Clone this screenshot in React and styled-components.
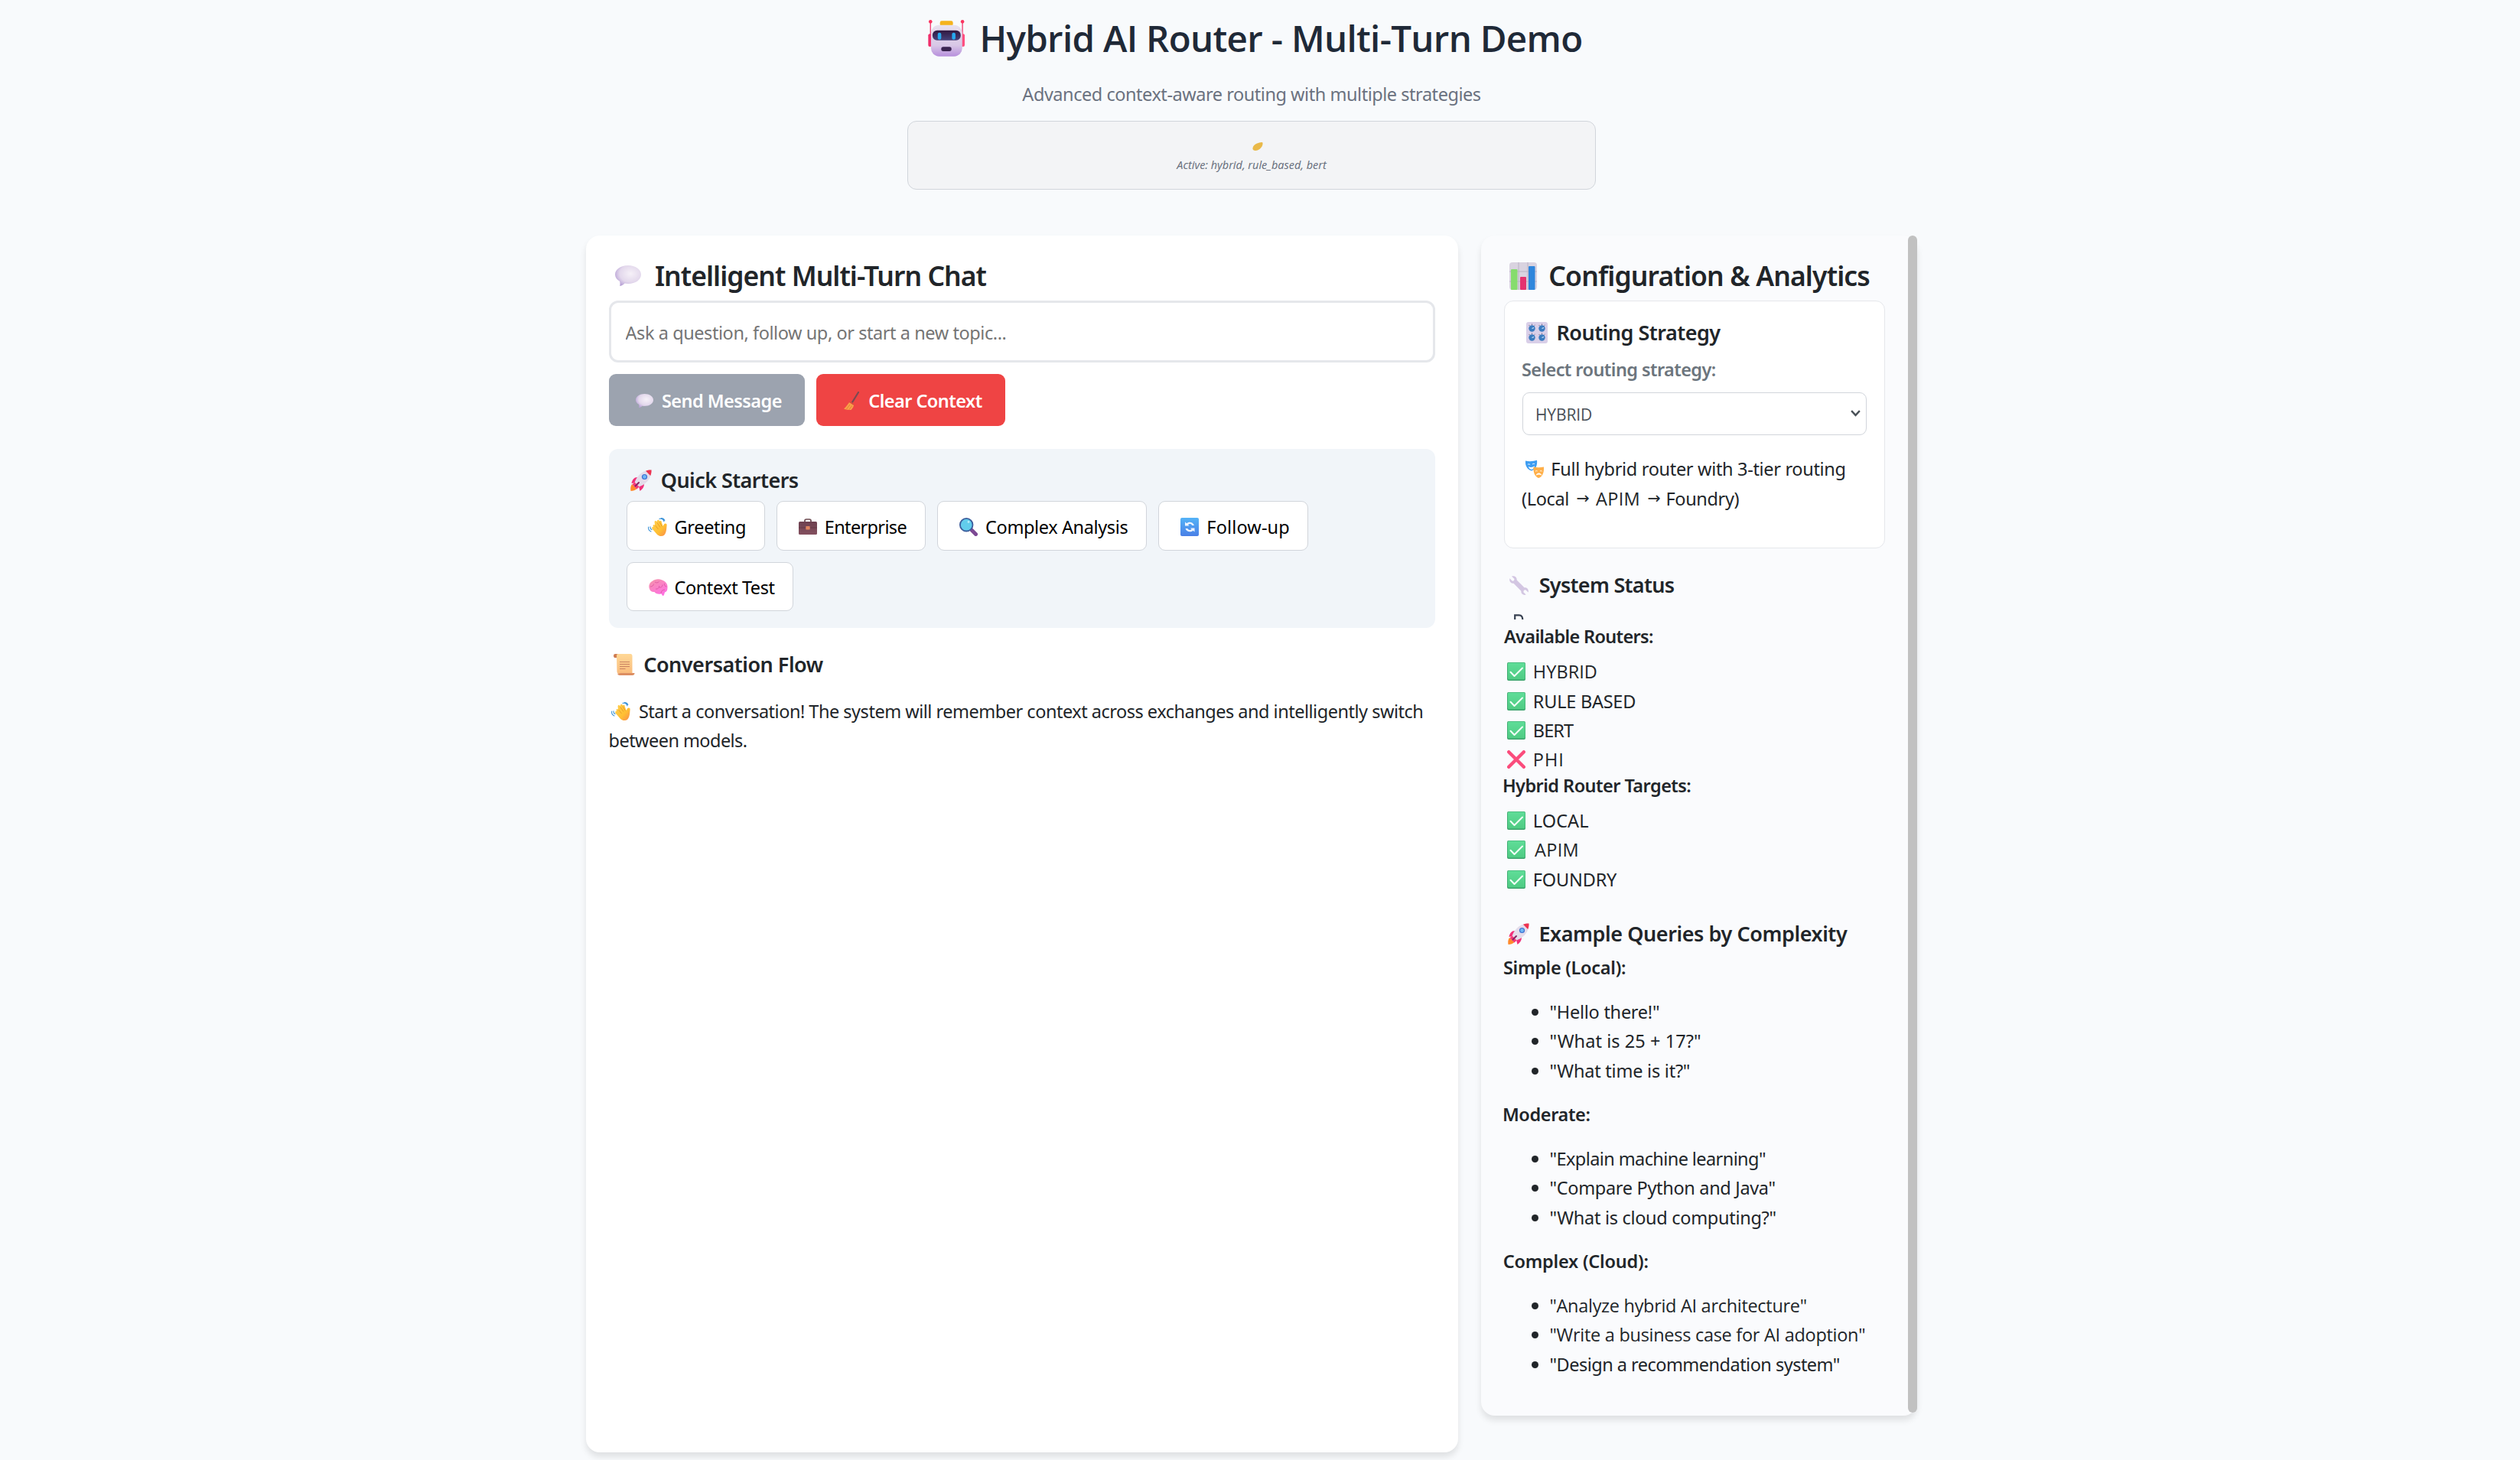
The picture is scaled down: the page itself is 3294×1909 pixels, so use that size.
import React from "react";
import styled, { createGlobalStyle } from "styled-components";

const NOTO = '"Noto Sans", "Open Sans", sans-serif';
const OPEN = '"Open Sans", "Noto Sans", sans-serif';

const GlobalStyle = createGlobalStyle`
  *, *::before, *::after { box-sizing: border-box; }
  html, body { margin: 0; padding: 0; }
  body { background: #f8fafc; color: #212529; font-family: ${NOTO}; font-size: 23.5px; overflow: hidden; }
`;

/* ---------- page ---------- */
const Page = styled.div`
  height: 1909px;
  padding-right: 22px;
  overflow: hidden;
  display: flex;
  flex-direction: column;
  align-items: center;
`;
const Header = styled.header`
  width: 900px;
  height: 308px;
  padding-top: 13px;
  display: flex;
  flex-direction: column;
  align-items: center;
`;
const Title = styled.h1`
  margin: 0 0 0 9px;
  height: 72px;
  display: flex;
  align-items: center;
  color: #1f2937;
`;
const Subtitle = styled.p`
  margin: 17px 0;
  height: 39px;
  display: flex;
  align-items: center;
  color: #6b7280;
`;
const Banner = styled.div`
  width: 100%;
  height: 90px;
  padding-top: 27px;
  background: #f3f4f6;
  border: 1px solid #d1d5db;
  border-radius: 12px;
  display: flex;
  flex-direction: column;
  align-items: center;
  color: #6b7280;
  svg { margin-left: 15px; }
`;
const BannerText = styled.p`
  margin: 6px 0 0;
  height: 22px;
  display: flex;
  align-items: center;
  font-style: italic;
`;
const Columns = styled.main`
  width: 1740px;
  display: grid;
  grid-template-columns: 2fr 1fr;
  gap: 30px;
  align-items: start;
`;
const Panel = styled.section`
  height: ${(p) => p.$h}px;
  padding: 30px;
  border-radius: 18px;
  background: ${(p) => p.$bg || "#fff"};
  box-shadow: 0 6px 9px rgba(0, 0, 0, 0.1);
`;
const SidePanel = styled(Panel)`
  display: flex;
  padding: 0;
`;
const SideBody = styled.div`
  flex: 1;
  padding: 30px;
`;
const ScrollThumb = styled.div`
  width: 12px;
  height: 1539px;
  border-radius: 6px;
  background: #c1c1c1;
`;

/* ---------- text ---------- */
const Line = styled.div`
  display: flex;
  align-items: center;
  height: ${(p) => p.$h || 38.4}px;
  margin-top: ${(p) => p.$mt || 0}px;
  color: ${(p) => p.$color || "inherit"};
`;
const IconSlot = styled.span`
  flex: none;
  display: flex;
  align-items: center;
  width: ${(p) => p.$w}px;
  padding: 2px 0 0 ${(p) => p.$pl || 0}px;
`;
const Text = styled.span`
  white-space: pre;
  padding-top: 2px;
  margin-left: ${(p) => -(p.$b || 0)}px;
  font-family: ${(p) => (p.$open ? OPEN : NOTO)};
  font-weight: ${(p) => (p.$strong ? 570 : 400)};
  letter-spacing: ${(p) => p.$ls || 0}px;
`;
const TitleText = styled(Text)`
  padding-top: 0;
  font-size: 47.5px;
`;
const H2Text = styled(Text)`
  padding-top: 1px;
  font-size: 35.5px;
`;
const H3Text = styled(Text)`
  padding-top: 1px;
  font-size: 27px;
`;
const SmallText = styled(Text)`
  font-size: 14.4px;
`;
const SelectText = styled(Text)`
  font-size: 21px;
`;
const Arrow = styled.span`
  width: 17px;
  margin: 0 8.5px 0 9.5px;
  font: 20.5px "DejaVu Sans", sans-serif;
`;
const List = styled.ul`
  list-style: none;
  margin: ${(p) => p.$mt}px 0 0;
  padding: 0;
`;
const Bullet = styled.span`
  flex: none;
  width: 9px;
  height: 9px;
  margin: 3px 16.5px 0 35.5px;
  border-radius: 50%;
  background: #212529;
`;

/* ---------- controls ---------- */
const Input = styled.input`
  display: block;
  width: 100%;
  height: 81px;
  margin-top: 12px;
  padding: 2px 18.5px 0;
  border: 3px solid #e5e7eb;
  border-radius: 12px;
  background: #fff;
  font-family: ${NOTO};
  font-size: 23.5px;
  letter-spacing: -0.43px;
  outline: none;
  &::placeholder { color: #757575; opacity: 1; }
`;
const Row = styled.div`
  display: flex;
  flex-wrap: wrap;
  gap: 15px;
  margin-top: ${(p) => p.$mt || 0}px;
`;
const Button = styled.button`
  width: ${(p) => p.$w}px;
  height: 68px;
  padding: 0;
  display: flex;
  align-items: center;
  border: 0;
  border-radius: 9px;
  background: ${(p) => p.$bg};
  color: #fff;
  font-size: 23.5px;
`;
const Chip = styled.button`
  width: ${(p) => p.$w}px;
  height: ${(p) => p.$h || 65}px;
  padding: 0;
  display: flex;
  align-items: center;
  border: 1px solid #d1d5db;
  border-radius: 9px;
  background: #fff;
  color: #000;
  font-size: 23.5px;
`;
const Starters = styled.div`
  margin-top: 30px;
  height: 234px;
  padding: 21px 23px;
  border-radius: 12px;
  background: #f1f5f9;
`;
const Card = styled.div`
  height: 324px;
  margin-top: 12px;
  padding: 21px 23px 0;
  background: #fff;
  border: 1px solid #e5e7eb;
  border-radius: 12px;
`;
const Select = styled.div`
  height: 56px;
  margin-top: 12px;
  padding: 0 7px 0 18px;
  display: flex;
  align-items: center;
  justify-content: space-between;
  border: 1px solid #d1d5db;
  border-radius: 9px;
  color: #495057;
`;
const SpinnerClip = styled.div`
  height: 7px;
  margin: 20px 0 0 13px;
  overflow: hidden;
  svg { display: block; }
`;
const Defs = styled.svg`
  position: absolute;
  width: 0;
  height: 0;
`;

/* ---------- icons ---------- */
const Gradients = () => (
  <Defs>
    <defs>
      <linearGradient id="lilac" x1="0" y1="0" x2="0" y2="1"><stop offset="0" stopColor="#e9e2ee" /><stop offset="0.65" stopColor="#d8c7e6" /><stop offset="1" stopColor="#b78fdc" /></linearGradient>
      <radialGradient id="bubble" cx="0.6" cy="0.4" r="0.65"><stop offset="0" stopColor="#f6f1f8" /><stop offset="0.65" stopColor="#e3d8ec" /><stop offset="1" stopColor="#b9a3d6" /></radialGradient>
      <linearGradient id="hand" x1="0" y1="0" x2="1" y2="1"><stop offset="0" stopColor="#ffd050" /><stop offset="0.6" stopColor="#ffbf33" /><stop offset="1" stopColor="#f98a4b" /></linearGradient>
      <linearGradient id="brain" x1="0" y1="0" x2="0.6" y2="1"><stop offset="0" stopColor="#f594a8" /><stop offset="1" stopColor="#ff72e0" /></linearGradient>
      <linearGradient id="paper" x1="0" y1="0" x2="0" y2="1"><stop offset="0" stopColor="#ffd896" /><stop offset="1" stopColor="#f9bb7c" /></linearGradient>
      <linearGradient id="blueBox" x1="0" y1="0" x2="0" y2="1"><stop offset="0" stopColor="#54b3f7" /><stop offset="1" stopColor="#4a7fe6" /></linearGradient>
      <linearGradient id="case" x1="0" y1="0" x2="0" y2="1"><stop offset="0" stopColor="#6d4150" /><stop offset="1" stopColor="#84505f" /></linearGradient>
      <linearGradient id="visor" x1="0" y1="0" x2="0" y2="1"><stop offset="0" stopColor="#30173f" /><stop offset="1" stopColor="#46427a" /></linearGradient>
      <linearGradient id="green" x1="0" y1="0" x2="0" y2="1"><stop offset="0" stopColor="#5fdd98" /><stop offset="1" stopColor="#4fcb83" /></linearGradient>
    </defs>
  </Defs>
);

const ICONS = {
  robot: ["50 37 150 144", <>
    <path d="M60 46V100M188 46V100" stroke="#f0386f" strokeWidth="4" />
    <circle cx="60" cy="44" r="7" fill="#fb3560" /><circle cx="188" cy="44" r="7" fill="#fb3560" />
    <rect x="51" y="92" width="14" height="50" rx="6" fill="#f02e6c" /><rect x="183" y="92" width="14" height="50" rx="6" fill="#ff4f80" />
    <rect x="98" y="41" width="52" height="20" rx="7" fill="#f5b31c" />
    <rect x="62" y="57" width="125" height="123" rx="32" fill="url(#lilac)" />
    <rect x="68" y="78" width="113" height="39" rx="18" fill="url(#visor)" />
    <rect x="89" y="87" width="14" height="27" rx="6" fill="#27a9ef" /><rect x="146" y="87" width="14" height="27" rx="6" fill="#27a9ef" />
    <rect x="103" y="143" width="41" height="17" rx="8" fill="#3a2450" /></>],
  speech: ["0 0 34 27", <path d="M17 0C26.500 0 34 5 34 12S26.500 24 17 24C15.500 24 14 23.900 12.600 23.600 10.500 26 8 27 6.200 27 6.700 25 6.600 22.500 6 20.700 2.300 18.700 0 15.600 0 12 0 5 7.500 0 17 0Z" fill="url(#bubble)" />],
  broom: ["0 0 20 24", <>
    <path d="M19 1 11 14" stroke="#7a4a52" strokeWidth="2.200" strokeLinecap="round" />
    <path d="M8 12.500 13 16C13.500 19 11.500 22 9.500 24 6 24 2.500 23.500 0 22.500 3 20 5.500 16.500 8 12.500Z" fill="#f9a04a" />
    <path d="M8 12.300 13.200 16 12.600 17.800 6.900 14Z" fill="#d9463f" /><path d="M3.500 23 8 17M7 23.600 10.500 18.500" stroke="#e0752f" strokeWidth="0.800" /></>],
  rocket: ["0 0 28 28", <>
    <path d="M2 19C0 22 0 25 0.500 28 3.500 28 6.500 27 8.500 25Z" fill="#ff8a2b" />
    <path d="M9 10C5 10 2.500 13 1.500 18L8 17ZM18 19C18 23 15.500 26 12.500 28L10.500 20Z" fill="#f0307a" />
    <path d="M27.500 0.500C20 0 13 4 9 10 7 13 5.500 16 5 19L9 23C12 22.500 15 21 18 19 24 15 28 8 27.500 0.500Z" fill="#e4dcea" />
    <path d="M27.500 0.500C25 0.300 22.300 0.800 20 1.800L26.200 8C27.200 5.600 27.700 3 27.500 0.500Z" fill="#ee3350" />
    <circle cx="18.500" cy="9.500" r="3.600" fill="#3d6fd0" /><circle cx="18.500" cy="9.500" r="2.400" fill="#6fb6f5" />
    <path d="M5.500 16.500 11.500 22.500 8.500 25.500 2.500 19.500Z" fill="#f43a78" /><path d="M6.500 21.500 11 17" stroke="#8b1f63" strokeWidth="2" strokeLinecap="round" /></>],
  wave: ["0 0 25 24", <>
    <path d="M7 11.500C5.600 9.600 7.800 8.200 9 9.800L8.600 5.800C8.300 3.800 10.700 3.300 11.300 5.200L12 3.700C12.600 2 15 2.600 14.800 4.400 16 3 18 3.900 17.800 5.800L19.500 11 21 8.500C21.800 7 25 7.200 24.600 9.700 24 15.500 24.300 24 17 24 13.500 24 11.500 21.500 9.500 19L5.500 14.500C4.500 13 6 11 7 12Z" fill="url(#hand)" />
    <path d="M9.500 10 13.500 15M12 6.500 16 12.500M15 5.500 18.500 11.500" stroke="#e99b25" strokeWidth="0.900" fill="none" />
    <path d="M0.700 12C0.300 14.500 1.500 17 4 18M3 11.800C2.800 13.400 3.600 15 5 15.600M15 1.500C17.500 0.500 20.500 2 21 5M17.500 0.600C19.500 0.600 21 1.700 21.800 3.400" stroke="#3b93d8" strokeWidth="1.100" fill="none" strokeLinecap="round" /></>],
  briefcase: ["0 0 24 21", <>
    <path d="M8 5V3Q8 1 10 1H14Q16 1 16 3V5" stroke="#6d4b52" strokeWidth="1.700" fill="none" />
    <rect x="0" y="4" width="24" height="17" rx="1.500" fill="url(#case)" /><path d="M0 12H24" stroke="#5b3341" strokeWidth="0.700" /><rect x="9.300" y="10" width="5.400" height="4.600" rx="0.800" fill="#e08560" /></>],
  magnifier: ["0 0 24 24", <>
    <path d="M16.500 16.500 21.500 21.500" stroke="#7d4a94" strokeWidth="5" strokeLinecap="round" /><circle cx="9.200" cy="9.200" r="8.300" fill="#62cdec" stroke="#3c5d9c" strokeWidth="1.800" />
    <circle cx="12" cy="5.500" r="1.400" fill="#b7ecfa" /></>],
  refresh: ["0 0 24 24", <>
    <rect width="24" height="24" rx="2" fill="url(#blueBox)" />
    <path d="M6 10.500V5.500L8 7.300C11 4.500 16.500 5.300 18 10H15.200C14 7.800 11.600 7.500 10 9L11.500 10.500ZM18.500 13.500V18.500L16.500 16.700C13.500 19.500 8 18.700 6.500 14H9.300C10.500 16.200 12.900 16.500 14.500 15L13 13.500Z" fill="#eef4ff" /></>],
  brain: ["0 0 25 22", <>
    <path d="M1 13C-0.500 10 0.500 5 4.500 3 8 0 13 -0.500 17 1.200 22 2.500 25 7 24.500 11.500 24.500 14.500 23.500 17 21 17.500L19.800 21.500 18 22 16.500 19.300C13 20.500 9 19.500 7.500 17 4.500 17.500 1.800 16 1 13Z" fill="url(#brain)" />
    <path d="M2 10C5 10 6 8.500 6.500 6.500M8 4C10 5.500 12 5 13.500 3.500M9 13C12 13.500 14 11.500 13.500 9M13.500 11C16.500 11.500 18 10 18 7.500M20.500 6C20 8.500 21.500 10 23.500 10M16 19C16 16 18 14 21 14" stroke="#d9539f" strokeWidth="0.800" fill="none" /></>],
  scroll: ["0 0 28 28", <>
    <path d="M0 2.200Q0 0 2.200 0H8V5H2Q0 5 0 2.200Z" fill="#cf7d52" /><path d="M4 2Q4 0 6 0H22.500Q24.500 0 24.500 2.500V26H7.500Q4.500 26 4.500 23Z" fill="url(#paper)" />
    <path d="M8 10.500H21M8 13.500H21M8 16.500H21M8 19.500H15.500" stroke="#c98262" strokeWidth="1.200" /><path d="M9.500 25H27.500Q27.500 28 24.500 28H8Q6 28 5 26Z" fill="#dc8e62" /></>],
  chart: ["0 0 36 36", <>
    <rect width="36" height="36" rx="4" fill="#d9d3e0" /><path d="M12 0V36M24 0V36M0 12H36M0 25H36" stroke="#b9b2c4" strokeWidth="1" />
    <rect x="2" y="9" width="8.500" height="27" rx="1" fill="#86dc6e" /><rect x="14" y="19" width="8" height="17" rx="1" fill="#e4326f" /><rect x="25" y="5" width="8.500" height="31" rx="1" fill="#2f86dc" /></>],
  knobs: ["0 0 28 28", <>
    <rect width="28" height="28" rx="3" fill="#d9cfe8" />
    {[[7.5, 8.5], [20.5, 8.5], [7.5, 20.5], [20.5, 20.5]].map(([x, y]) => (
      <g key={x + "-" + y}><path d={`M${x - 4} ${y - 4.5}l1.200 1.200M${x} ${y - 6}v1.500M${x + 4} ${y - 4.5}l-1.200 1.200`} stroke="#6d6380" strokeWidth="0.900" /><circle cx={x} cy={y} r="4.200" fill="#3b7cc0" /><path d={`M${x} ${y}l2.500 -1`} stroke="#d8ecff" strokeWidth="1.100" /></g>
    ))}</>],
  masks: ["0 0 24 24", <>
    <path d="M0 1.500C4.500 2.600 10.500 2.300 15 0.800 15.800 7.500 13.500 12.800 8 14.500 2.500 13.500-0.800 7.500 0 1.500Z" fill="#3d9df2" />
    <path d="M3 6.300Q4.500 5.200 6 6.500M9 6Q10.500 4.800 12 5.600" stroke="#fff" strokeWidth="0.900" fill="none" />
    <path d="M3.800 9C6.500 10.500 9.500 10.300 12 8 11.500 11 10 12.500 8 13 6 12.600 4.500 11.200 3.800 9Z" fill="#fff" />
    <path d="M10.500 9.500C15 10.500 19.500 10.400 24 9.500 24.500 16 22.500 22.500 17.500 24 12 22.500 10 16 10.500 9.500Z" fill="#ffb04a" />
    <path d="M13 15.200Q14.500 14 15.700 15M19 15Q20.300 14 21.800 15.200" stroke="#fff" strokeWidth="0.900" fill="none" />
    <path d="M14 20.200C15.500 17 19.500 17 21 20.200 18.500 18.900 16.500 18.900 14 20.200Z" fill="#fff" stroke="#fff" strokeWidth="0.600" /></>],
  wrench: ["0 0 25 25", <path d="M3 0.600 6.500 4 6 6.200 3.800 6.700 0.500 3.300C-0.600 6.500 1.500 10 5.500 9.800L15.300 19.800C15 23.500 18.300 25.800 21.700 24.600L18.300 21.200 18.900 18.800 21.200 18.300 24.600 21.500C25.700 18 23 14.800 19.500 15.300L9.700 5.400C9.900 1.600 6.500-0.600 3 0.600Z" fill="#d3c6e2" />],
  check: ["0 0 24 24", <>
    <rect width="24" height="24" rx="2" fill="#3ba36c" /><rect x="0.800" y="0.500" width="22.700" height="22" rx="1.800" fill="url(#green)" /><path d="M4.500 12.800 9.500 18 20 7.500" stroke="#f2fff8" strokeWidth="2" fill="none" strokeLinecap="round" strokeLinejoin="round" /></>],
  cross: ["0 0 24 24", <path d="M2.200 2.200 21.800 21.800M21.800 2.200 2.200 21.800" stroke="#fb4c7c" strokeWidth="4.400" strokeLinecap="round" />],
  leaf: ["0 0 14 11", <path d="M0.500 9C0 4.500 4.500 0.500 13 0 14.500 1.500 13 6.500 9.500 9 6 11.500 1.500 11.500 0.500 9Z" fill="#e9b949" />],
  arc: ["0 0 13 9", <path d="M1.200 7V1.400H6.500C10 1.400 11.500 3.500 11.300 9" stroke="#374151" strokeWidth="2.200" fill="none" />],
  chevron: ["0 0 14 9", <path d="M1.200 1.200 7 7 12.800 1.200" stroke="#495057" strokeWidth="2.600" fill="none" />],
};
const Icon = ({ name, w, h }) => (
  <svg viewBox={ICONS[name][0]} width={w} height={h} preserveAspectRatio="none">{ICONS[name][1]}</svg>
);
const Slot = ({ name, w, h, pl, slot }) => (
  <IconSlot $w={slot} $pl={pl}><Icon name={name} w={w} h={h || w} /></IconSlot>
);

/* ---------- data ---------- */
const STARTERS = [
  { t: "Greeting", ls: -0.36, b: 1.4, icon: "wave", iw: 25, ih: 24, box: 181, pl: 27, slot: 63 },
  { t: "Enterprise", ls: -0.66, b: 2.2, icon: "briefcase", iw: 24, ih: 21, box: 195, pl: 28, slot: 64 },
  { t: "Complex Analysis", ls: -0.38, b: 1.4, icon: "magnifier", iw: 24, ih: 24, box: 274, pl: 28, slot: 63.5 },
  { t: "Follow-up", ls: 0.14, b: 2.2, icon: "refresh", iw: 24, ih: 24, box: 196, pl: 28, slot: 64.5 },
  { t: "Context Test", ls: -0.45, b: 1.4, icon: "brain", iw: 25, ih: 22, box: 218, h: 64, pl: 28, slot: 63 },
];
const ROUTERS = [
  { t: "HYBRID", ls: 0.06, b: 2.2, open: true, ok: true },
  { t: "RULE BASED", ls: -0.24, b: 2.2, ok: true },
  { t: "BERT", ls: -0.89, b: 2.2, ok: true },
  { t: "PHI", ls: 0.97, b: 2.2, open: true, ok: false },
];
const TARGETS = [
  { t: "LOCAL", ls: 0.08, b: 2.2, ok: true },
  { t: "APIM", ls: 0.35, b: 0, open: true, ok: true },
  { t: "FOUNDRY", ls: -0.18, b: 2.2, ok: true },
];
const QUERIES = [
  { t: "Simple (Local):", ls: -0.29, b: 1.1, mt: 10, items: [
    { t: '"Hello there!"', ls: -0.26 },
    { t: '"What is 25 + 17?"', ls: 0.07 },
    { t: '"What time is it?"', ls: -0.23 },
  ] },
  { t: "Moderate:", ls: -0.38, b: 2.1, mt: 23.5, items: [
    { t: '"Explain machine learning"', ls: -0.59 },
    { t: '"Compare Python and Java"', ls: -0.32 },
    { t: '"What is cloud computing?"', ls: -0.3 },
  ] },
  { t: "Complex (Cloud):", ls: -0.22, b: 1.3, mt: 23.3, items: [
    { t: '"Analyze hybrid AI architecture"', ls: -0.3, open: true },
    { t: '"Write a business case for AI adoption"', ls: -0.28, open: true },
    { t: '"Design a recommendation system"', ls: -0.52 },
  ] },
];

const StatusList = ({ items, mt }) => (
  <List $mt={mt}>
    {items.map((r) => (
      <Line as="li" key={r.t}>
        <Slot name={r.ok ? "check" : "cross"} w={24} pl={4} slot={40} />
        <Text $ls={r.ls} $b={r.b} $open={r.open}>{r.t}</Text>
      </Line>
    ))}
  </List>
);

export default function App() {
  return (
    <Page>
      <GlobalStyle />
      <Gradients />
      <Header>
        <Title>
          <Slot name="robot" w={49} h={48} slot={72.5} />
          <TitleText $ls={-0.7} $b={4.5} $open $strong>Hybrid AI Router - Multi-Turn Demo</TitleText>
        </Title>
        <Subtitle><Text $ls={-0.46}>Advanced context-aware routing with multiple strategies</Text></Subtitle>
        <Banner>
          <Icon name="leaf" w={14} h={11} />
          <BannerText><SmallText>Active: hybrid, rule_based, bert</SmallText></BannerText>
        </Banner>
      </Header>
      <Columns>
        <Panel $h={1591}>
          <Line $h={43}>
            <Slot name="speech" w={34} h={27} pl={8} slot={61} />
            <H2Text $ls={-0.97} $b={1.1} $strong>Intelligent Multi-Turn Chat</H2Text>
          </Line>
          <Input placeholder="Ask a question, follow up, or start a new topic..." />
          <Row $mt={15}>
            <Button $w={256} $bg="#9ca3af">
              <Slot name="speech" w={23} h={18} pl={35} slot={70} />
              <Text $ls={-0.53} $b={1.1} $strong>Send Message</Text>
            </Button>
            <Button $w={247} $bg="#ef4444">
              <Slot name="broom" w={20} h={24} pl={36} slot={69.5} />
              <Text $ls={-0.54} $b={1.3} $strong>Clear Context</Text>
            </Button>
          </Row>
          <Starters>
            <Line $h={37}>
              <Slot name="rocket" w={28} pl={5} slot={46} />
              <H3Text $ls={-0.56} $b={1.3} $strong>Quick Starters</H3Text>
            </Line>
            <Row $mt={10}>
              {STARTERS.map((s) => (
                <Chip key={s.t} $w={s.box} $h={s.h}>
                  <Slot name={s.icon} w={s.iw} h={s.ih} pl={s.pl} slot={s.slot} />
                  <Text $ls={s.ls} $b={s.b}>{s.t}</Text>
                </Chip>
              ))}
            </Row>
          </Starters>
          <Line $h={38} $mt={28}>
            <Slot name="scroll" w={28} pl={6} slot={46.5} />
            <H3Text $ls={-0.49} $b={1.3} $strong>Conversation Flow</H3Text>
          </Line>
          <Line $mt={22.4}>
            <Slot name="wave" w={25} h={24} pl={3} slot={40} />
            <Text $ls={-0.49} $b={1.1}>Start a conversation! The system will remember context across exchanges and intelligently switch</Text>
          </Line>
          <Line><Text $ls={-0.56} $b={0.4}>between models.</Text></Line>
        </Panel>

        <SidePanel $h={1543} $bg="#fafbfd">
          <SideBody>
            <Line $h={43}>
              <Slot name="chart" w={36} pl={7} slot={60} />
              <H2Text $ls={-0.86} $b={1.7} $strong>Configuration &amp; Analytics</H2Text>
            </Line>
            <Card>
              <Line $h={38}>
                <Slot name="knobs" w={28} pl={5} slot={46.5} />
                <H3Text $ls={-0.5} $b={2.1} $strong>Routing Strategy</H3Text>
              </Line>
              <Line $mt={9.6} $color="#6c757d"><Text $ls={-0.58} $b={1.1} $strong>Select routing strategy:</Text></Line>
              <Select>
                <SelectText $ls={-0.12} $b={2} $open>HYBRID</SelectText>
                <Icon name="chevron" w={13} h={9} />
              </Select>
              <Line $mt={24}>
                <Slot name="masks" w={24} pl={4} slot={39.5} />
                <Text $ls={-0.32} $b={2.2}>Full hybrid router with 3-tier routing</Text>
              </Line>
              <Line>
                <Text $ls={-0.38} $b={0.9}>(Local</Text>
                <Arrow>→</Arrow>
                <Text $ls={0.35} $open>APIM</Text>
                <Arrow>→</Arrow>
                <Text $ls={-0.38} $b={1.5}>Foundry)</Text>
              </Line>
            </Card>
            <Line $h={38} $mt={28}>
              <Slot name="wrench" w={25} pl={7} slot={47} />
              <H3Text $ls={-0.7} $b={1.3} $strong>System Status</H3Text>
            </Line>
            <SpinnerClip><Icon name="arc" w={13} h={9} /></SpinnerClip>
            <Line $h={29} $mt={6.5}><Text $ls={-0.67} $strong>Available Routers:</Text></Line>
            <StatusList items={ROUTERS} mt={12.5} />
            <Line $h={29}><Text $ls={-0.55} $b={2.1} $strong>Hybrid Router Targets:</Text></Line>
            <StatusList items={TARGETS} mt={12} />
            <Line $h={38} $mt={33.5}>
              <Slot name="rocket" w={28} pl={5} slot={47.5} />
              <H3Text $ls={-0.43} $b={2.1} $strong>Example Queries by Complexity</H3Text>
            </Line>
            {QUERIES.map((g) => (
              <React.Fragment key={g.t}>
                <Line $h={29} $mt={g.mt}><Text $ls={g.ls} $b={g.b} $strong>{g.t}</Text></Line>
                <List $mt={24.4}>
                  {g.items.map((q) => (
                    <Line as="li" key={q.t}><Bullet /><Text $ls={q.ls} $b={1.5} $open={q.open}>{q.t}</Text></Line>
                  ))}
                </List>
              </React.Fragment>
            ))}
          </SideBody>
          <ScrollThumb />
        </SidePanel>
      </Columns>
    </Page>
  );
}
